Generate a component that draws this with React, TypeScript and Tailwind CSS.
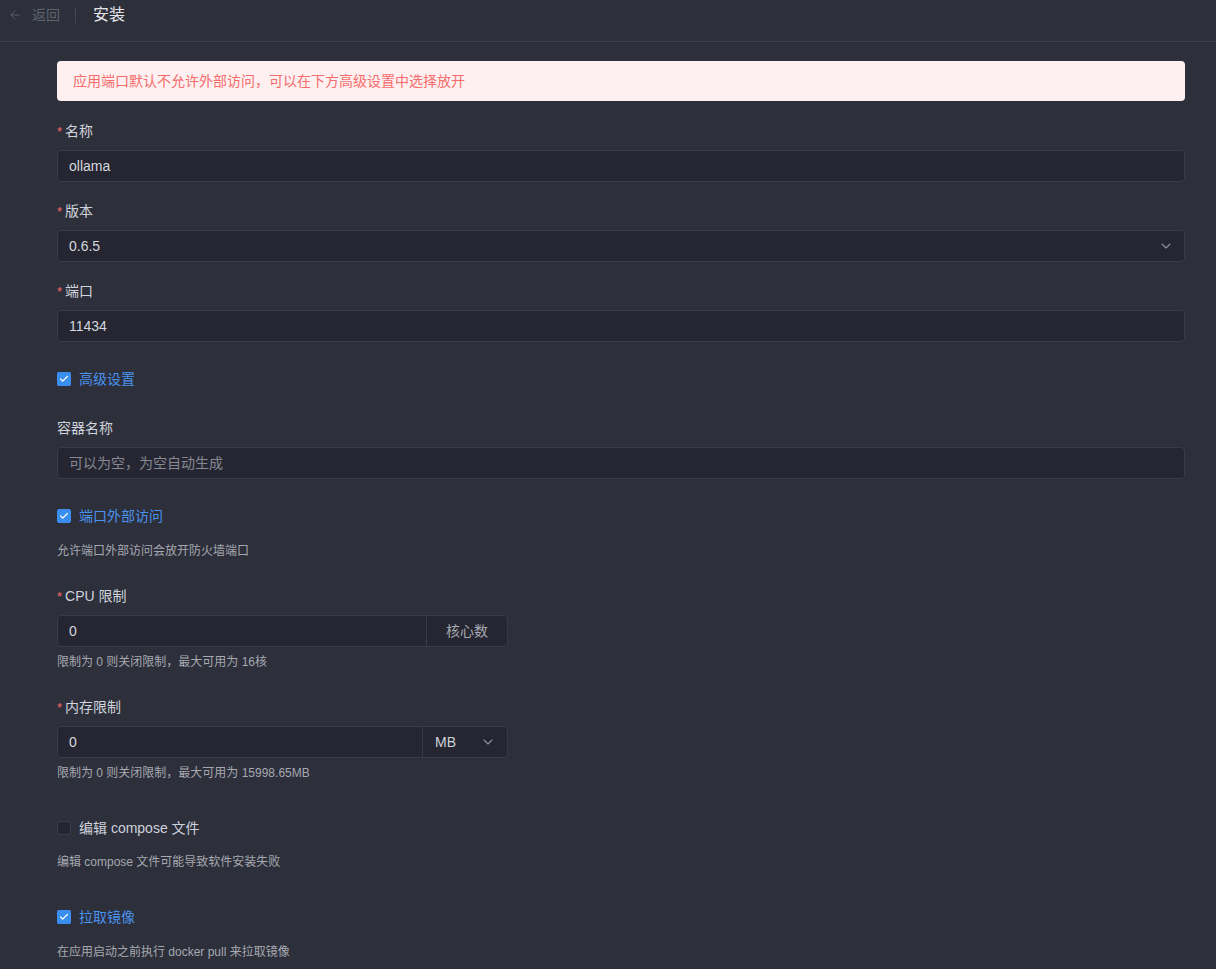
import { ArrowLeft, ChevronDown, Check } from "lucide-react";

const font = { fontFamily: '"Liberation Sans", "Noto Sans CJK SC", sans-serif' };

function Label({ text, required, className = "" }: { text: string; required?: boolean; className?: string }) {
  return (
    <div className={`h-[22px] flex items-center text-[14px] text-[#cfd3dc] ${className}`}>
      {required && <span className="text-[#f56c6c] text-[13px] mr-[3px] mt-[2px]">*</span>}
      {text}
    </div>
  );
}

function TextInput({ value, placeholder, className = "" }: { value?: string; placeholder?: string; className?: string }) {
  return (
    <div className={`h-[32px] rounded-[4px] bg-[#252631] border border-[#393b47] flex items-center px-[11px] text-[14px] ${className}`}>
      {value ? <span className="text-[#d4d7de]">{value}</span> : <span className="text-[#868993]">{placeholder}</span>}
    </div>
  );
}

function CheckRow({ text, checked, className = "" }: { text: string; checked: boolean; className?: string }) {
  return (
    <div className={`h-[22px] flex items-center gap-[8px] text-[14px] ${className}`}>
      {checked ? (
        <span className="w-[14px] h-[14px] rounded-[2px] bg-[#3a8ef0] flex items-center justify-center">
          <Check size={10} strokeWidth={3} color="#ffffff" />
        </span>
      ) : (
        <span className="w-[14px] h-[14px] rounded-[2px] bg-[#252631] border border-[#3a3c48]" />
      )}
      <span className={checked ? "text-[#4a93ee]" : "text-[#cfd3dc]"}>{text}</span>
    </div>
  );
}

function Help({ text, className = "" }: { text: string; className?: string }) {
  return <div className={`h-[20px] flex items-center text-[12px] text-[#a6a9b0] ${className}`}>{text}</div>;
}

export default function App() {
  return (
    <div className="min-h-[969px] bg-[#2d2f3b]" style={font}>
      <div className="h-[42px] border-b border-[#3c3e4b] pl-[8px]">
        <div className="h-[30px] flex items-center">
          <ArrowLeft size={14} strokeWidth={1.5} color="#5f626d" />
          <span className="ml-[10px] text-[14px] text-[#5f626d]">返回</span>
          <span className="ml-[15px] w-px h-[16px] bg-[#454753]" />
          <span className="ml-[17px] text-[16px] text-[#e4e6eb]">安装</span>
        </div>
      </div>

      <div className="pl-[57px] pr-[31px] pb-[20px]">
        <div className="mt-[19px] h-[40px] rounded-[4px] bg-[#fef0f0] flex items-center px-[16px] text-[14px] text-[#f56c6c]">
          应用端口默认不允许外部访问，可以在下方高级设置中选择放开
        </div>

        <Label text="名称" required className="mt-[19px]" />
        <TextInput value="ollama" className="mt-[8px]" />

        <Label text="版本" required className="mt-[18px]" />
        <div className="mt-[8px] h-[32px] rounded-[4px] bg-[#252631] border border-[#393b47] flex items-center justify-between pl-[11px] pr-[10px] text-[14px]">
          <span className="text-[#d4d7de]">0.6.5</span>
          <ChevronDown size={16} strokeWidth={1.6} color="#8d9099" />
        </div>

        <Label text="端口" required className="mt-[18px]" />
        <TextInput value="11434" className="mt-[8px]" />

        <CheckRow text="高级设置" checked className="mt-[26px]" />

        <Label text="容器名称" className="mt-[27px]" />
        <TextInput placeholder="可以为空，为空自动生成" className="mt-[8px]" />

        <CheckRow text="端口外部访问" checked className="mt-[26px]" />
        <Help text="允许端口外部访问会放开防火墙端口" className="mt-[14px]" />

        <Label text="CPU 限制" required className="mt-[24px]" />
        <div className="mt-[8px] w-[451px] h-[32px] flex rounded-[4px] bg-[#252631] border border-[#393b47] text-[14px]">
          <div className="flex-1 flex items-center px-[11px] text-[#d4d7de]">0</div>
          <div className="w-[81px] border-l border-[#393b47] flex items-center justify-center text-[#a6a9b0]">核心数</div>
        </div>
        <Help text="限制为 0 则关闭限制，最大可用为 16核" className="mt-[5px]" />

        <Label text="内存限制" required className="mt-[24px]" />
        <div className="mt-[8px] w-[451px] h-[32px] flex rounded-[4px] bg-[#252631] border border-[#393b47] text-[14px]">
          <div className="flex-1 flex items-center px-[11px] text-[#d4d7de]">0</div>
          <div className="w-[85px] border-l border-[#393b47] flex items-center justify-between pl-[12px] pr-[11px] text-[#cfd3dc]">
            <span>MB</span>
            <ChevronDown size={16} strokeWidth={1.6} color="#8d9099" />
          </div>
        </div>
        <Help text="限制为 0 则关闭限制，最大可用为 15998.65MB" className="mt-[5px]" />

        <CheckRow text="编辑 compose 文件" checked={false} className="mt-[34px]" />
        <Help text="编辑 compose 文件可能导致软件安装失败" className="mt-[13px]" />

        <CheckRow text="拉取镜像" checked className="mt-[34px]" />
        <Help text="在应用启动之前执行 docker pull 来拉取镜像" className="mt-[14px]" />
      </div>
    </div>
  );
}
